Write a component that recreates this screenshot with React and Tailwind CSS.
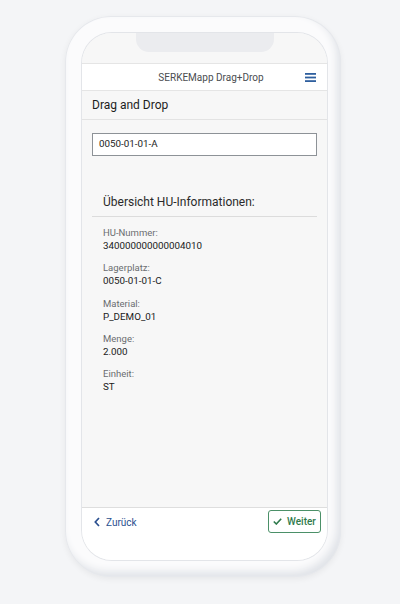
import React from 'react';

// ─── Zeile mit Label + Wert ──────────────────────────────────────────────────
function Field({ label, value }) {
    return (
        <div className="h-[35.25px]">
            <div className="text-[9.5px] leading-[12px] text-[#6a6d70]">{label}</div>
            <div className="text-[9.8px] leading-[14px] text-[#1a1a1a]">{value}</div>
        </div>
    );
}

export default function App() {
    const fields = [
        ['HU-Nummer:', '340000000000004010'],
        ['Lagerplatz:', '0050-01-01-C'],
        ['Material:', 'P_DEMO_01'],
        ['Menge:', '2.000'],
        ['Einheit:', 'ST'],
    ];

    return (
        <div
            className="w-[400px] h-[604px] bg-[#f4f5f7] overflow-hidden"
            style={{ fontFamily: 'Roboto, "Liberation Sans", Arial, sans-serif' }}
        >
            {/* Gerät */}
            <div className="ml-[65px] mt-[16px] w-[276px] h-[561px] rounded-[46px] bg-[#fbfbfc] py-[17px] pl-[17px] pr-[14px] shadow-[inset_0_0_0_1px_#e6e8ec,inset_-4px_-5px_8px_#dfe2e7,0_2px_6px_rgba(0,0,0,0.06)]">
                <div className="relative h-full rounded-[30px] overflow-hidden bg-[#f7f7f7] flex flex-col shadow-[0_0_0_1px_#e3e5e9]">
                    {/* Notch */}
                    <div className="absolute left-1/2 -translate-x-1/2 top-0 w-[138px] h-[19px] rounded-b-[13px] bg-[#ebecef]" />

                    <div className="h-[30px] shrink-0 bg-[#f7f7f7]" />

                    {/* Kopfzeile */}
                    <div className="h-[28px] shrink-0 bg-white border-y border-[#e5e5e5] flex items-center justify-center pl-[13px] relative">
                        <span className="text-[10px] text-[#4a4d50]">SERKEMapp Drag+Drop</span>
                        <svg className="absolute right-[11px] top-[9px]" width="11" height="9" viewBox="0 0 11 9">
                            <rect x="0" y="0" width="11" height="1.8" fill="#2f5f9e" />
                            <rect x="0" y="3.6" width="11" height="1.8" fill="#2f5f9e" />
                            <rect x="0" y="7.2" width="11" height="1.8" fill="#2f5f9e" />
                        </svg>
                    </div>

                    {/* Unterkopf */}
                    <div className="h-[29px] shrink-0 border-b border-[#e3e3e3] flex items-center px-[10px]">
                        <span className="text-[12px] text-[#1d1d1d]">Drag and Drop</span>
                    </div>

                    {/* Inhalt */}
                    <div className="flex-1 px-[10px] pt-[13px]">
                        <div className="h-[23px] bg-white border border-[#8d9297] flex items-center px-[6px] text-[9.8px] text-[#222]">
                            0050-01-01-A
                        </div>
                        <div className="mt-[38px] px-[11px] pb-[6px] border-b border-[#dcdcdc] text-[12px] leading-[16px] text-[#2a2a2a]">
                            Übersicht HU-Informationen:
                        </div>
                        <div className="pl-[11px] pt-[10px]">
                            {fields.map(([l, v]) => (
                                <Field key={l} label={l} value={v} />
                            ))}
                        </div>
                    </div>

                    {/* Fußzeile */}
                    <div className="h-[53px] shrink-0 bg-white border-t border-[#dedede] pt-[2px] pl-[12px] pr-[6px]">
                        <div className="h-[23px] flex items-center justify-between">
                            <div className="flex items-center gap-[6px] text-[#2a4f8f] pt-[1px]">
                                <svg width="6" height="10" viewBox="0 0 6 10">
                                    <path d="M5 1 L1.3 5 L5 9" stroke="#2a4f8f" strokeWidth="1.7" fill="none" />
                                </svg>
                                <span className="text-[10px]">Zurück</span>
                            </div>
                            <div className="h-[23px] w-[53px] rounded-[3px] border border-[#4b9068] flex items-center justify-center gap-[5px] text-[#2f7a4c]">
                                <svg width="9" height="7" viewBox="0 0 9 7">
                                    <path d="M0.8 3.5 L3.3 6 L8.2 0.8" stroke="#2f7a4c" strokeWidth="1.6" fill="none" />
                                </svg>
                                <span className="text-[10px] font-medium">Weiter</span>
                            </div>
                        </div>
                    </div>
                </div>
            </div>
        </div>
    );
}
